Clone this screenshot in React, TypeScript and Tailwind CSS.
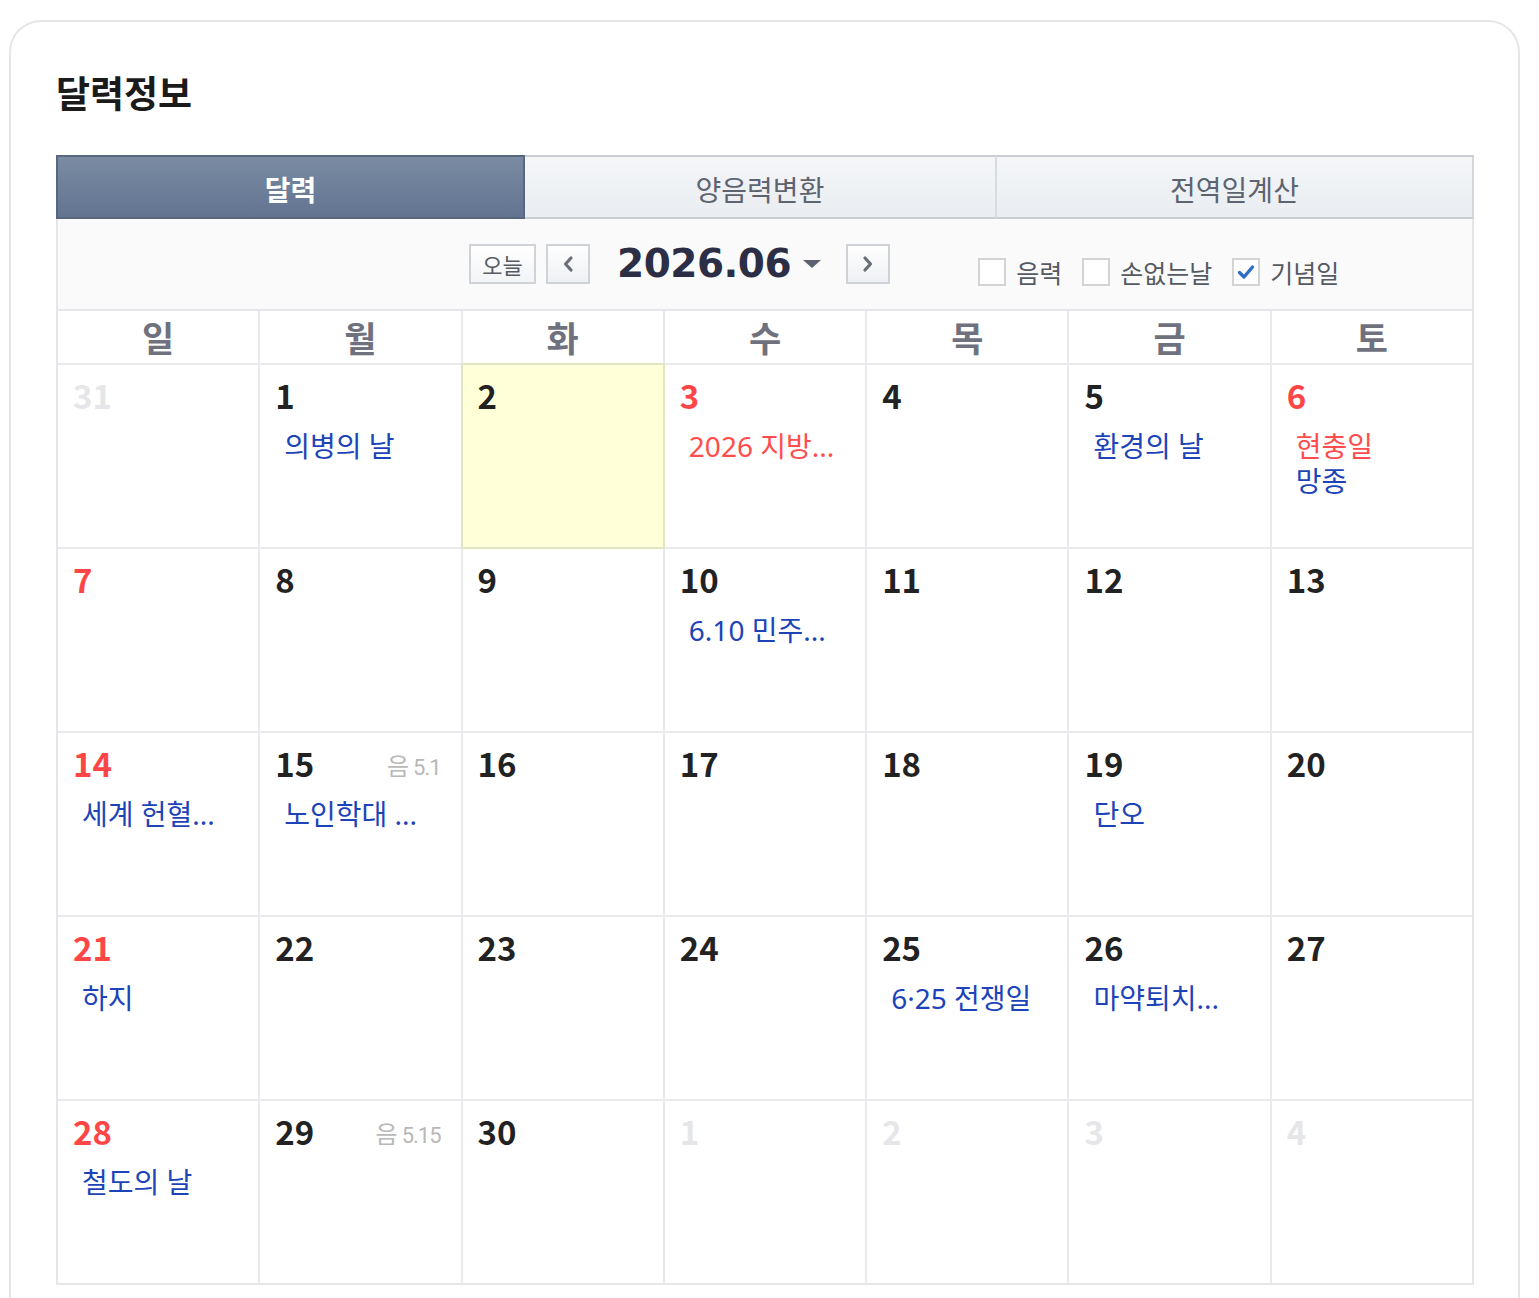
import React from "react";

type Day = {
  n: number;
  muted?: boolean;
  red?: boolean;
  today?: boolean;
  lunar?: string;
  events?: { text: string; red?: boolean }[];
};

const weekdays = ["일", "월", "화", "수", "목", "금", "토"];

const weeks: Day[][] = [
  [
    { n: 31, muted: true },
    { n: 1, events: [{ text: "의병의 날" }] },
    { n: 2, today: true },
    { n: 3, red: true, events: [{ text: "2026 지방...", red: true }] },
    { n: 4 },
    { n: 5, events: [{ text: "환경의 날" }] },
    { n: 6, red: true, events: [{ text: "현충일", red: true }, { text: "망종" }] },
  ],
  [
    { n: 7, red: true },
    { n: 8 },
    { n: 9 },
    { n: 10, events: [{ text: "6.10 민주..." }] },
    { n: 11 },
    { n: 12 },
    { n: 13 },
  ],
  [
    { n: 14, red: true, events: [{ text: "세계 헌혈..." }] },
    { n: 15, lunar: "5.1", events: [{ text: "노인학대 ..." }] },
    { n: 16 },
    { n: 17 },
    { n: 18 },
    { n: 19, events: [{ text: "단오" }] },
    { n: 20 },
  ],
  [
    { n: 21, red: true, events: [{ text: "하지" }] },
    { n: 22 },
    { n: 23 },
    { n: 24 },
    { n: 25, events: [{ text: "6·25 전쟁일" }] },
    { n: 26, events: [{ text: "마약퇴치..." }] },
    { n: 27 },
  ],
  [
    { n: 28, red: true, events: [{ text: "철도의 날" }] },
    { n: 29, lunar: "5.15" },
    { n: 30 },
    { n: 1, muted: true },
    { n: 2, muted: true },
    { n: 3, muted: true },
    { n: 4, muted: true },
  ],
];

const font = { fontFamily: '"Noto Sans CJK KR", "Noto Sans", sans-serif' };
const eventFont = { fontFamily: '"Noto Sans", "Noto Sans CJK KR", sans-serif' };

function NavButton({ dir }: { dir: "prev" | "next" }) {
  return (
    <button className="flex h-[40px] w-[44px] items-center justify-center border-2 border-[#cfd3d8] bg-gradient-to-b from-white to-[#eef0f3]">
      <svg width="12" height="18" viewBox="0 0 12 18">
        <path
          d={dir === "prev" ? "M9 3 L3.5 9 L9 15" : "M3 3 L8.5 9 L3 15"}
          fill="none"
          stroke="#6a6e77"
          strokeWidth="3.2"
          strokeLinecap="round"
          strokeLinejoin="round"
        />
      </svg>
    </button>
  );
}

function Check({ label, checked }: { label: string; checked?: boolean }) {
  return (
    <label className="flex items-center gap-[10px]">
      <span className="flex h-[28px] w-[28px] items-center justify-center border-2 border-[#d4d4d4] bg-white">
        {checked && (
          <svg width="18" height="16" viewBox="0 0 18 16">
            <path
              d="M2.5 8.5 L7 13 L15.5 3"
              fill="none"
              stroke="#2f6cc4"
              strokeWidth="3.4"
              strokeLinecap="round"
              strokeLinejoin="round"
            />
          </svg>
        )}
      </span>
      <span className="text-[25px] leading-[30px] text-[#555a62]">{label}</span>
    </label>
  );
}

function Cell({ d }: { d: Day }) {
  const numColor = d.muted ? "text-[#e6e6e8]" : d.red ? "text-[#ff4646]" : "text-[#222222]";
  return (
    <div
      className={
        "relative h-[182px] pt-[9px] pl-[15px] pr-[20px] " +
        (d.today ? "bg-[#ffffd8] shadow-[0_0_0_2px_#e4e4c2]" : "bg-white")
      }
    >
      <div className="flex items-start justify-between">
        <span className={"text-[33px] font-bold leading-[42px] " + numColor}>{d.n}</span>
        {d.lunar && (
          <span className="mt-[8px] flex items-baseline gap-[4px] text-[#b8b8b8]">
            <span className="text-[24px] leading-[30px]">음</span>
            <span className="text-[22px] leading-[30px] tracking-[-1px]" style={{ fontFamily: '"Roboto", sans-serif' }}>
              {d.lunar}
            </span>
          </span>
        )}
      </div>
      <div className="mt-[13px] pl-[9px]" style={eventFont}>
        {d.events?.map((e, i) => (
          <div
            key={i}
            className={"whitespace-nowrap text-[28px] leading-[35px] " + (e.red ? "text-[#ff4d4d]" : "text-[#1c44b8]")}
          >
            {e.text}
          </div>
        ))}
      </div>
    </div>
  );
}

export default function App() {
  return (
    <div className="min-h-screen bg-white pl-[9px] pr-[19px] pt-[20px]" style={font}>
      <div className="rounded-t-[32px] border-x-2 border-t-2 border-[#e6e6e6] pl-[45px] pr-[44px] pt-[46px] pb-[40px]">
        {/* title */}
        <h1 className="text-[37px] font-bold leading-[48px] text-[#1b1b1b]">달력정보</h1>

        {/* tabs */}
        <div className="mt-[39px] grid h-[64px] grid-cols-[469px_472px_1fr]">
          <button className="flex items-center justify-center border-2 border-[#58677d] bg-gradient-to-b from-[#7a8ba3] to-[#627490] pt-[3px] text-[28px] font-bold text-white">
            달력
          </button>
          <button className="flex items-center justify-center border-y-2 border-r-2 border-y-[#c9cdd2] border-r-[#d8dce1] bg-gradient-to-b from-[#f4f6f8] to-[#eaedf1] pt-[3px] text-[28px] text-[#5d6470]">
            양음력변환
          </button>
          <button className="flex items-center justify-center border-y-2 border-r-2 border-y-[#c9cdd2] border-r-[#d3d7dc] bg-gradient-to-b from-[#f4f6f8] to-[#eaedf1] pt-[3px] text-[28px] text-[#5d6470]">
            전역일계산
          </button>
        </div>

        {/* toolbar */}
        <div className="flex h-[90px] items-center border-x-2 border-[#e4e6e9] bg-[#fafafa] pl-[411px]">
          <div className="flex items-center">
            <button className="flex h-[40px] w-[67px] items-center justify-center border-2 border-[#cfd3d8] bg-gradient-to-b from-white to-[#f3f4f6] text-[22px] text-[#565b63]">
              오늘
            </button>
            <div className="ml-[10px]">
              <NavButton dir="prev" />
            </div>
            <div
              className="ml-[27px] text-[39px] font-bold leading-[48px] tracking-[-0.5px] text-[#2b2e45]"
              style={{ fontFamily: '"DejaVu Sans", sans-serif' }}
            >
              2026.06
            </div>
            <svg className="ml-[12px]" width="18" height="10" viewBox="0 0 18 10">
              <path d="M0 1 L18 1 L9 9 Z" fill="#5b6170" />
            </svg>
            <div className="ml-[25px]">
              <NavButton dir="next" />
            </div>
          </div>
          <div className="ml-[88px] mt-[16px] flex items-center gap-[20px]">
            <Check label="음력" />
            <Check label="손없는날" />
            <Check label="기념일" checked />
          </div>
        </div>

        {/* calendar grid */}
        <div className="grid grid-cols-7 gap-[2px] border-2 border-[#e4e6ea] bg-[#e8eaee]">
          {weekdays.map((w) => (
            <div key={w} className="flex h-[52px] items-center justify-center bg-white text-[35px] font-bold text-[#6f727e]">
              {w}
            </div>
          ))}
          {weeks.flat().map((d, i) => (
            <Cell key={i} d={d} />
          ))}
        </div>
      </div>
    </div>
  );
}
